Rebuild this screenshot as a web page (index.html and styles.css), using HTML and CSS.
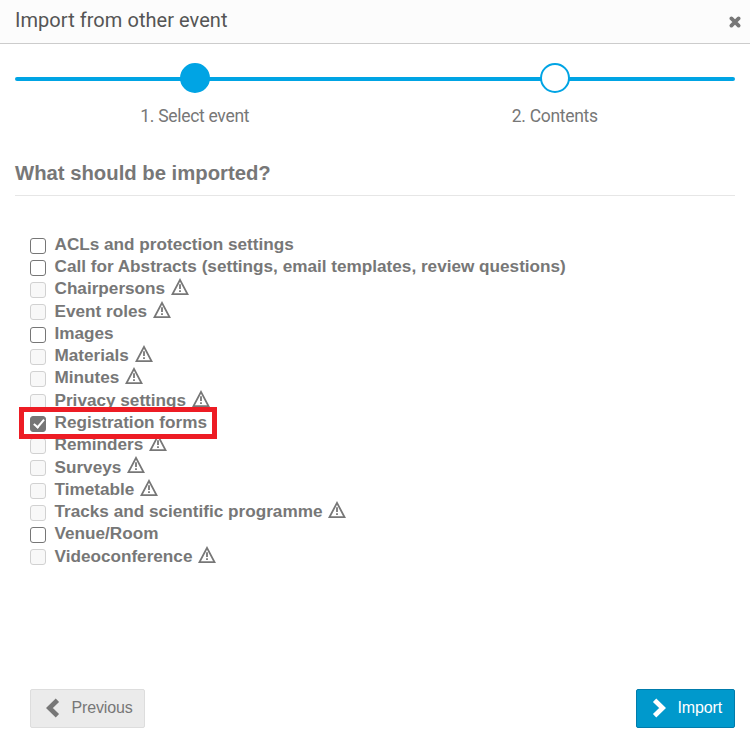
FILE: index.html
```
<!DOCTYPE html>
<html lang="en">

<head>
    <meta charset="utf-8">
    <title>Import from other event</title>
    <link rel="stylesheet" href="styles.css">
</head>

<body>
    <svg class="symbols">
        <symbol id="warning" viewBox="0 0 18 18">
            <path d="M9 1.9 L16.5 16.1 H1.5 Z" fill="none" stroke="currentColor" stroke-width="1.8" />
            <path d="M9 6.3 V11 M9 12.2 V14" fill="none" stroke="currentColor" stroke-width="1.8" />
        </symbol>
    </svg>

    <div class="header">
        <h1 class="title">Import from other event</h1>
        <svg class="close" viewBox="0 0 12 12">
            <path d="M2.4 2.4 L9.6 9.6 M9.6 2.4 L2.4 9.6" stroke="currentColor" stroke-width="3.7" stroke-linecap="round" />
        </svg>
    </div>

    <div class="steps">
        <div class="step active">
            <span class="circle"></span>
            <span class="step-name">1. Select event</span>
        </div>
        <div class="step">
            <span class="circle"></span>
            <span class="step-name">2. Contents</span>
        </div>
    </div>

    <h2 class="question">What should be imported?</h2>

    <ul class="options">
        <li><label><input type="checkbox"><span>ACLs and protection settings</span></label></li>
        <li><label><input type="checkbox"><span>Call for Abstracts (settings, email templates, review questions)</span></label></li>
        <li><label><input type="checkbox" disabled><span>Chairpersons</span></label><svg class="warning"><use href="#warning" /></svg></li>
        <li><label><input type="checkbox" disabled><span>Event roles</span></label><svg class="warning"><use href="#warning" /></svg></li>
        <li><label><input type="checkbox"><span>Images</span></label></li>
        <li><label><input type="checkbox" disabled><span>Materials</span></label><svg class="warning"><use href="#warning" /></svg></li>
        <li><label><input type="checkbox" disabled><span>Minutes</span></label><svg class="warning"><use href="#warning" /></svg></li>
        <li><label><input type="checkbox" disabled><span>Privacy settings</span></label><svg class="warning"><use href="#warning" /></svg></li>
        <li class="marked"><label><input type="checkbox" checked><span>Registration forms</span></label></li>
        <li><label><input type="checkbox" disabled><span>Reminders</span></label><svg class="warning"><use href="#warning" /></svg></li>
        <li><label><input type="checkbox" disabled><span>Surveys</span></label><svg class="warning"><use href="#warning" /></svg></li>
        <li><label><input type="checkbox" disabled><span>Timetable</span></label><svg class="warning"><use href="#warning" /></svg></li>
        <li><label><input type="checkbox" disabled><span>Tracks and scientific programme</span></label><svg class="warning"><use href="#warning" /></svg></li>
        <li><label><input type="checkbox"><span>Venue/Room</span></label></li>
        <li><label><input type="checkbox" disabled><span>Videoconference</span></label><svg class="warning"><use href="#warning" /></svg></li>
    </ul>

    <div class="buttons">
        <button type="button" class="btn">
            <svg class="arrow" viewBox="0 0 14 20"><path d="M11.4 2.3 L3.4 10 L11.4 17.7" /></svg>
            <span>Previous</span>
        </button>
        <button type="button" class="btn btn-import">
            <svg class="arrow" viewBox="0 0 14 20"><path d="M2.6 2.3 L10.6 10 L2.6 17.7" /></svg>
            <span>Import</span>
        </button>
    </div>
</body>

</html>
```

FILE: styles.css
```
*,
*::before,
*::after {
    box-sizing: border-box;
}

body {
    margin: 0;
    height: 751px;
    display: flex;
    flex-direction: column;
    background-color: #fff;
    color: #777;
    font-family: "Liberation Sans", Arial, sans-serif;
    overflow: hidden;
}

.symbols {
    display: none;
}

.header {
    display: flex;
    justify-content: space-between;
    height: 44px;
    padding: 0 9px 0 15px;
    background-color: #fcfcfc;
    border-bottom: 1px solid #ccc;
}

.title {
    margin: 0;
    font: 400 20px/40px Roboto, sans-serif;
    letter-spacing: 0.05px;
    color: #555;
}

.close {
    width: 12px;
    height: 12px;
    margin-top: 16px;
}

/* Progress line with the two steps */
.steps {
    display: flex;
    position: relative;
    height: 86px;
    margin: 19px 15px 0;
}

.steps::before {
    content: "";
    position: absolute;
    top: 14px;
    left: 0;
    right: 0;
    height: 4px;
    border-radius: 2px;
    background-color: #00a4e4;
}

.step {
    display: flex;
    position: relative;
    flex-direction: column;
    align-items: center;
    flex: 1;
}

.circle {
    width: 30px;
    height: 30px;
    border: 2px solid #00a4e4;
    border-radius: 50%;
    background-color: #fff;
}

.active .circle {
    background-color: #00a4e4;
}

.step-name {
    margin-top: 12px;
    padding-right: 0.5px;
    font: 400 17.5px/22px Roboto, sans-serif;
    letter-spacing: -0.3px;
}

.question {
    height: 47px;
    margin: 0 15px;
    padding-top: 12px;
    border-bottom: 1px solid #e6e6e6;
    font-size: 20.3px;
    line-height: 24px;
}

.options {
    list-style: none;
    margin: 37px 0 0;
    padding: 0 30px;
    font-size: 17.16px;
    font-weight: bold;
}

.options li {
    display: flex;
    position: relative;
    height: 22.27px;
    line-height: 20px;
}

.options label {
    display: flex;
    padding-top: 0.9px;
}

.options input {
    appearance: none;
    width: 16px;
    height: 16px;
    margin: 3.8px 8.5px 0 0;
    border: 1px solid #767676;
    border-radius: 3px;
    background-color: #fff;
}

.options input:disabled {
    border-color: #d1d1d1;
    background-color: #f8f8f8;
}

.options input:checked {
    display: flex;
    background-color: #767676;
}

.options input:checked::before {
    content: "";
    width: 6px;
    height: 11px;
    margin: 0 0 0 4.5px;
    border: solid #fff;
    border-width: 0 2px 2px 0;
    transform: rotate(40deg);
}

.warning {
    width: 18px;
    height: 18px;
    margin: 0.8px 0 0 6px;
}

/* Red frame around the highlighted option */
.marked::after {
    content: "";
    position: absolute;
    z-index: 1;
    left: -11px;
    top: -4px;
    width: 198px;
    height: 32px;
    border: 5px solid #ed1c24;
}

.buttons {
    display: flex;
    justify-content: space-between;
    margin: auto 15px 23px 30px;
}

.btn {
    display: flex;
    align-items: center;
    gap: 11.5px;
    width: 115px;
    height: 39px;
    padding: 0 0 1px 15px;
    border: 1px solid #ddd;
    border-radius: 2px;
    background-color: #ebebeb;
    color: #777;
    font: 16px "Liberation Sans", Arial, sans-serif;
    letter-spacing: -0.15px;
    cursor: pointer;
}

.btn-import {
    width: 99px;
    border-color: #007cac;
    background-color: #0099cc;
    color: #fff;
}

.arrow {
    width: 14px;
    height: 20px;
    fill: none;
    stroke: currentColor;
    stroke-width: 4.8;
}
```
